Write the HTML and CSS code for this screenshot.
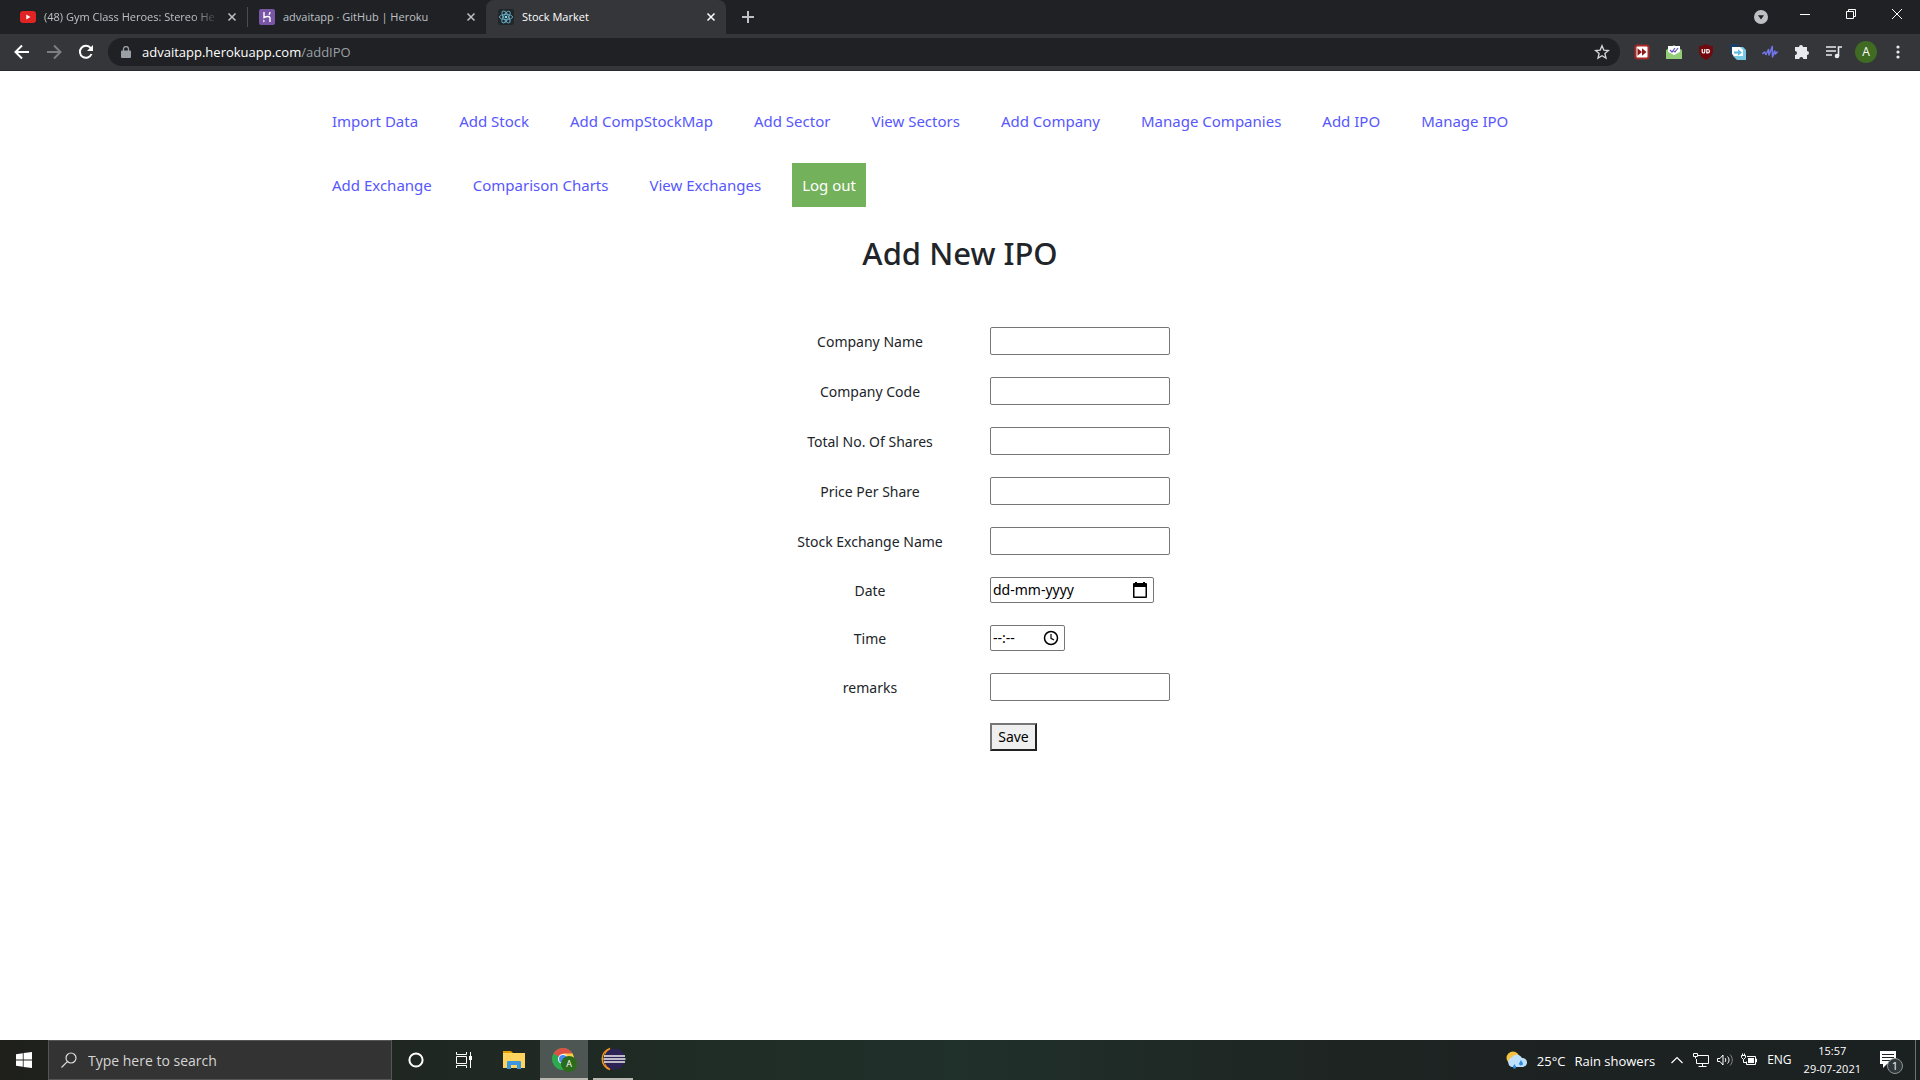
FILE: index.html
```html
<!DOCTYPE html>
<html lang="en">
<head>
<meta charset="utf-8">
<title>Stock Market</title>
<link rel="stylesheet" href="styles.css">
</head>
<body>
<header class="browser">
  <div class="tabstrip">
    <div class="tab">
      <svg class="favicon" viewBox="0 0 16 16"><rect y="2" width="16" height="12" rx="3" fill="#e02424"/><path d="M6.300 5.500v5l4.200-2.500z" fill="#fff"/></svg>
      <span class="tab-title fade">(48) Gym Class Heroes: Stereo He</span>
      <button class="tab-close" aria-label="Close tab"><svg viewBox="0 0 10 10"><path d="M1.500 1.500l7 7M8.500 1.500l-7 7"/></svg></button>
    </div>
    <div class="tab divided">
      <svg class="favicon" viewBox="0 0 16 16"><rect width="16" height="16" rx="2" fill="#7856a5"/><path d="M5 3v5.500c2-1 6-1.800 6 .8V13M11 3c0 1-.5 2-1.200 2.700" fill="none" stroke="#fff" stroke-width="1.400"/><path d="M4.300 10.500v3l1.700-1.500z" fill="#fff"/></svg>
      <span class="tab-title">advaitapp · GitHub | Heroku</span>
      <button class="tab-close" aria-label="Close tab"><svg viewBox="0 0 10 10"><path d="M1.500 1.500l7 7M8.500 1.500l-7 7"/></svg></button>
    </div>
    <div class="tab active">
      <svg class="favicon" viewBox="0 0 16 16"><rect width="16" height="16" rx="2" fill="#20272b"/><g fill="none" stroke="#68afc4" stroke-width=".9"><ellipse cx="8" cy="8" rx="6.600" ry="2.600"/><ellipse cx="8" cy="8" rx="6.600" ry="2.600" transform="rotate(60 8 8)"/><ellipse cx="8" cy="8" rx="6.600" ry="2.600" transform="rotate(120 8 8)"/></g><circle cx="8" cy="8" r="1.300" fill="#8bd8ed"/></svg>
      <span class="tab-title">Stock Market</span>
      <button class="tab-close" aria-label="Close tab"><svg viewBox="0 0 10 10"><path d="M1.500 1.500l7 7M8.500 1.500l-7 7"/></svg></button>
    </div>
    <button class="new-tab" aria-label="New tab"><svg viewBox="0 0 12 12"><path d="M6 0v12M0 6h12"/></svg></button>
    <div class="window-controls">
      <button class="tab-search" aria-label="Search tabs"><svg viewBox="0 0 14 14"><circle cx="7" cy="7" r="7" fill="#bdc1c6"/><path d="M4 5.200h6L7 9.500z" fill="#202124"/></svg></button>
      <button aria-label="Minimize"><svg viewBox="0 0 10 10"><path d="M0 5.500h10"/></svg></button>
      <button aria-label="Restore"><svg viewBox="0 0 10 10"><path d="M.5 2.500h7v7h-7zM2.500 2.500v-2h7v7h-2"/></svg></button>
      <button aria-label="Close"><svg viewBox="0 0 10 10"><path d="M0 0l10 10M10 0L0 10"/></svg></button>
    </div>
  </div>
  <div class="toolbar">
    <div class="nav-group">
      <button class="nav-btn" aria-label="Back"><svg viewBox="0 0 16 16"><path d="M15 8H2M8 1.500L1.500 8 8 14.500"/></svg></button>
      <button class="nav-btn dim" aria-label="Forward"><svg viewBox="0 0 16 16"><path d="M1 8h13M8 1.500L14.500 8 8 14.500"/></svg></button>
      <button class="nav-btn" aria-label="Reload"><svg viewBox="0 0 16 16"><path d="M13.500 10A6 6 0 1 1 12.700 4.200"/><path d="M15 1v6H9z" fill="#fff" stroke="none"/></svg></button>
    </div>
    <div class="omnibox">
      <svg class="lock" viewBox="0 0 10 12"><path d="M1 4.500h8a1 1 0 0 1 1 1V11a1 1 0 0 1-1 1H1a1 1 0 0 1-1-1V5.500a1 1 0 0 1 1-1z" fill="#9aa0a6"/><path d="M2.500 5V3a2.500 2.500 0 0 1 5 0v2" fill="none" stroke="#9aa0a6" stroke-width="1.300"/></svg>
      <span class="url">advaitapp.herokuapp.com<span class="path">/addIPO</span></span>
      <svg class="star" viewBox="0 0 16 16"><path d="M8 1.800l1.800 4.300 4.600.4-3.500 3 1.100 4.600L8 11.700l-4 2.400 1.100-4.600-3.500-3 4.600-.4z" fill="none" stroke="#d5d7da" stroke-width="1.300"/></svg>
    </div>
    <div class="extensions">
      <svg viewBox="0 0 16 16"><rect x=".5" y=".5" width="15" height="15" rx="3" fill="#a82a26"/><rect x="2.500" y="2.500" width="11" height="11" rx="1" fill="#fff"/><path d="M3.500 4.200L8 8l-4.500 3.800zM8 4.200L12.500 8 8 11.800z" fill="#8c1a1a"/></svg>
      <svg viewBox="0 0 16 16"><path d="M0 6l8-5 8 5v9H0z" fill="#84c66c"/><path d="M2 2h12v6l-6 4-6-4z" fill="#fff"/><path d="M4 6l2 2 3-4M7.500 7L9 8l3-4" fill="none" stroke="#6254b8" stroke-width="1.200"/><path d="M0 7l8 4 8-4v8H0z" fill="#94cd78"/></svg>
      <svg viewBox="0 0 16 16"><path d="M8 0c2 1.500 5 2 7 2v5c0 4-3 7-7 9-4-2-7-5-7-9V2c2 0 5-.5 7-2z" fill="#700a0e"/><path d="M4.200 5v2.700a1.300 1.300 0 0 0 2.600 0V5" fill="none" stroke="#fff" stroke-width="1.200"/><path d="M8.800 5.500h1a1.600 1.600 0 0 1 0 3.300h-1z" fill="none" stroke="#fff" stroke-width="1.200"/></svg>
      <svg viewBox="0 0 16 16"><path d="M0 0h9v12H3l-3-3z" fill="#1c3f68"/><path d="M5 3h8l3 3v10H7l-4-4z" fill="#78c8e4"/><path d="M2 3h8l3 3v6H4l-2-2z" fill="#fff"/><path d="M4 7.500h4V5.300l4 3.200-4 3.200V9.500H4z" fill="#5cb9e2"/></svg>
      <svg viewBox="0 0 16 16"><path d="M.8 9.500L2.500 8 4 10.500 6.500 5.500 7 11l3.300-8.500L10.500 13l2.300-6 .6 3L15.200 8" fill="none" stroke="#7377ee" stroke-width="1.500" stroke-linejoin="round" stroke-linecap="round"/></svg>
      <svg viewBox="0 0 16 16"><path d="M1 3h4a2 2 0 1 1 4 0h4v4a2 2 0 1 1 0 4v4H9.300a2 2 0 0 0-4 0H1v-4a2 2 0 0 0 0-4z" fill="#e8eaed"/></svg>
      <svg viewBox="0 0 16 16"><path d="M0 3h10M0 7h10M0 11h6M12.500 12V3H16" fill="none" stroke="#e8eaed" stroke-width="1.600"/><circle cx="11" cy="12" r="2.300" fill="#e8eaed"/></svg>
    </div>
    <button class="avatar" aria-label="Profile">A</button>
    <button class="menu" aria-label="Menu"><svg viewBox="0 0 4 14"><circle cx="2" cy="2" r="1.600"/><circle cx="2" cy="7" r="1.600"/><circle cx="2" cy="12" r="1.600"/></svg></button>
  </div>
</header>

<main class="page">
  <nav class="site-nav">
    <a href="#">Import Data</a>
    <a href="#">Add Stock</a>
    <a href="#">Add CompStockMap</a>
    <a href="#">Add Sector</a>
    <a href="#">View Sectors</a>
    <a href="#">Add Company</a>
    <a href="#">Manage Companies</a>
    <a href="#">Add IPO</a>
    <a href="#">Manage IPO</a>
    <a href="#">Add Exchange</a>
    <a href="#">Comparison Charts</a>
    <a href="#">View Exchanges</a>
    <a href="#" class="logout">Log out</a>
  </nav>
  <h1>Add New IPO</h1>
  <form class="ipo-form">
    <label for="name">Company Name</label><input id="name" type="text">
    <label for="code">Company Code</label><input id="code" type="text">
    <label for="shares">Total No. Of Shares</label><input id="shares" type="text">
    <label for="price">Price Per Share</label><input id="price" type="text">
    <label for="exchange">Stock Exchange Name</label><input id="exchange" type="text">
    <label for="date">Date</label>
    <div class="picker date">
      <input id="date" type="text" placeholder="dd-mm-yyyy">
      <button type="button" aria-label="Show date picker"><svg viewBox="0 0 16 16"><path d="M3 0h2v1h6V0h2v1h1a1 1 0 0 1 1 1v13a1 1 0 0 1-1 1H2a1 1 0 0 1-1-1V2a1 1 0 0 1 1-1h1zM2.500 5v9.500h11V5z" fill-rule="evenodd"/></svg></button>
    </div>
    <label for="time">Time</label>
    <div class="picker time">
      <input id="time" type="text" placeholder="--:--">
      <button type="button" aria-label="Show time picker"><svg viewBox="0 0 16 16"><circle cx="8" cy="8" r="6.500" fill="none" stroke="#000" stroke-width="1.500"/><path d="M8 4v4.300l3 1.800" fill="none" stroke="#000" stroke-width="1.200"/></svg></button>
    </div>
    <label for="remarks">remarks</label><input id="remarks" type="text">
    <button class="save" type="button">Save</button>
  </form>
</main>

<footer class="taskbar">
  <button class="start" aria-label="Start"><svg viewBox="0 0 16 16"><path d="M0 2.200L6.800 1.200v6.300H0zM7.600 1.100L16 0v7.500H7.600zM0 8.400h6.800v6.400L0 13.800zM7.600 8.400H16V16l-8.400-1.100z" fill="#fff"/></svg></button>
  <label class="search">
    <svg viewBox="0 0 16 16"><circle cx="10" cy="6" r="5" fill="none" stroke="#ddd" stroke-width="1.200"/><path d="M6.300 9.700L.5 15.500" stroke="#ddd" stroke-width="1.200"/></svg>
    <input type="text" placeholder="Type here to search" aria-label="Type here to search">
  </label>
  <div class="apps">
    <button aria-label="Cortana"><svg viewBox="0 0 16 16"><circle cx="8" cy="8" r="6.600" fill="none" stroke="#fff" stroke-width="2"/></svg></button>
    <button aria-label="Task View"><svg viewBox="0 0 16 16"><path d="M.5 0v2.500h10V0M.5 16v-2.500h10V16M.5 4.500h10v7H.5zM14.500 0v4M14.500 8v8" fill="none" stroke="#fff"/><path d="M13 4h3v4h-3z" fill="#fff"/></svg></button>
    <button class="files" aria-label="File Explorer"><svg class="large" viewBox="0 0 22 22"><path d="M0 2h8l2 2v3H0z" fill="#e2a100"/><path d="M0 4h22v15H0z" fill="#ffd45e"/><path d="M4 20v-7a1 1 0 0 1 1-1h12a1 1 0 0 1 1 1v7h-4v-4H8v4z" fill="#3a96dd"/></svg></button>
    <button class="current" aria-label="Google Chrome"><svg class="wide" viewBox="0 0 26 26"><circle cx="12" cy="13" r="11" fill="#2da94f"/><path d="M12 13L2.500 7.500a11 11 0 0 1 19 0z" fill="#dd5144"/><path d="M12 13V7.500h9.500A11 11 0 0 1 12 24l5-8z" fill="#ffcd46"/><circle cx="12" cy="13" r="5" fill="#fff"/><circle cx="12" cy="13" r="4" fill="#4a8af4"/><circle cx="18" cy="18" r="8" fill="#2c6b1c"/><text x="18" y="21" text-anchor="middle" class="badge">A</text></svg></button>
    <button class="open" aria-label="Eclipse"><svg class="wide" viewBox="0 0 26 26"><path d="M10 2.500A11 11 0 0 0 10 23.500 13 13 0 0 1 10 2.500z" fill="none" stroke="#f7941e" stroke-width="1.600"/><circle cx="14.500" cy="13" r="10.500" fill="#2c2255"/><path d="M4 10h21M3.500 13h22M4 16h21" stroke="#eee" stroke-width="1.600"/></svg></button>
  </div>
  <div class="tray">
    <svg class="weather" viewBox="0 0 22 18"><circle cx="7" cy="7" r="6.500" fill="#f7c244"/><path d="M6 16a5 5 0 0 1-.5-9.500A6 6 0 0 1 16 7a4.500 4.500 0 0 1 1 9z" fill="#bfe0fa"/><path d="M15 9l2 3.500a2 2 0 1 1-4 0zM8.500 13l1.500 2.500a1.600 1.600 0 1 1-3 0z" fill="#2f8be0"/></svg>
    <span class="temp">25°C</span>
    <span class="condition">Rain showers</span>
    <svg class="chevron" viewBox="0 0 12 8"><path d="M.5 7L6 1.500 11.500 7"/></svg>
    <svg class="tray-icon" viewBox="0 0 16 16"><path d="M5 3.500h10.500v8h-12V7M5.500 14.500h8M9.500 11.500v3M.5 1.500h4v3h-4zM2.500 4.500v2"/></svg>
    <svg class="tray-icon" viewBox="0 0 16 16"><path d="M.5 6.500H3L6 3v10L3 9.500H.5zM8 6c1 1 1 3 0 4M10.500 4.500c2 2 2 5 0 7"/><path d="M13 2.500c3 3 3 8 0 11" stroke="#888"/></svg>
    <svg class="tray-icon" viewBox="0 0 16 16"><path d="M6 4.500h8.500v8h-9v-3M14.500 7h1v3h-1M.5 3.500h4v2L2.500 7.500.5 5.500zM1.500 1.500v2M3.500 1.500v2M2.500 7.500v3h3"/><path d="M7 6h6v5H7z" fill="#fff" stroke="none"/></svg>
    <span class="lang">ENG</span>
    <div class="clock"><span>15:57</span><span>29-07-2021</span></div>
    <svg class="notices" viewBox="0 0 26 26"><path d="M1 3h16v13H8l-4 4v-4H1z" fill="#fff"/><path d="M3 6.500h12M3 9.500h12M3 12.500h8" stroke="#1e2422"/><circle cx="16" cy="18" r="7.500" fill="#30373a" stroke="#8f9494"/><text x="16" y="22" text-anchor="middle" class="count">1</text></svg>
    <span class="show-desktop"></span>
  </div>
</footer>
</body>
</html>
```
FILE: styles.css
```css
* { box-sizing: border-box; }

body {
  margin: 0;
  min-height: 100vh;
  display: flex;
  flex-direction: column;
  background: #fff;
  color: #212529;
  font: 15px/24px "Open Sans", "Noto Sans", sans-serif;
}

button {
  border: 0;
  padding: 0;
  background: none;
  color: inherit;
  font: inherit;
}

svg { display: block; flex: none; }

/* Browser frame */
.browser { background: #35363a; color: #e8eaed; font-size: 12px; border-bottom: 1px solid #292a2d; }
.tabstrip { display: flex; height: 34px; padding-left: 8px; background: #202124; }
.tab {
  display: flex;
  align-items: center;
  gap: 8px;
  width: 239px;
  padding: 0 10px 0 12px;
  color: #bdc1c6;
}
.divided { background: linear-gradient(#4a4c50, #4a4c50) 0 7px / 1px 20px no-repeat; }
.active { width: 240px; background: #35363a; color: #fff; border-radius: 8px 8px 0 0; }
.tab-title { flex: 1; white-space: nowrap; font-size: 11px; }
.favicon { width: 16px; height: 16px; }
.fade { mask-image: linear-gradient(90deg, #000 85%, transparent); }
.tab-close svg { width: 10px; height: 10px; stroke: currentColor; stroke-width: 1.5; }
.new-tab { width: 44px; display: flex; align-items: center; justify-content: center; }
.new-tab svg { width: 12px; height: 12px; stroke: #bdc1c6; stroke-width: 2; }
.window-controls { margin-left: auto; display: flex; height: 28px; }
.window-controls button { width: 46px; display: flex; align-items: center; justify-content: center; }
.window-controls svg { width: 10px; height: 10px; fill: none; stroke: #fff; }
.window-controls .tab-search { width: 42px; height: 34px; }
.window-controls .tab-search svg { width: 14px; height: 14px; stroke: none; }

.toolbar { display: flex; align-items: center; height: 36px; padding: 0 15px 0 6px; }
.nav-group { display: flex; padding-right: 6px; }
.nav-btn { width: 32px; }
.nav-btn svg { width: 16px; height: 16px; margin: 0 auto; fill: none; stroke: #fff; stroke-width: 2; }
.dim svg { stroke: #7d7e82; }
.omnibox {
  flex: 1;
  display: flex;
  align-items: center;
  gap: 11px;
  height: 28px;
  padding: 0 10px 0 13px;
  border-radius: 14px;
  background: #202124;
}
.lock { width: 10px; height: 12px; }
.url { flex: 1; color: #fff; font-size: 13px; }
.path { color: #9aa0a6; }
.star { width: 16px; height: 16px; }
.extensions { display: flex; gap: 16px; padding: 0 13px 0 14px; }
.extensions svg { width: 16px; height: 16px; }
.avatar { width: 22px; height: 22px; border-radius: 50%; background: #3f6b22; color: #fff; line-height: 22px; }
.menu { width: 28px; display: flex; justify-content: flex-end; padding-right: 5px; }
.menu svg { width: 4px; height: 14px; fill: #e8eaed; }

/* Page */
.page { flex: 1; padding: 28px 16px; font-family: "Noto Sans", "Open Sans", sans-serif; }
.site-nav { display: flex; flex-wrap: wrap; gap: 20px 21px; max-width: 1276px; margin: 0 auto; }
.site-nav a { padding: 10px; color: #5757fd; text-decoration: none; }
.site-nav .logout { background: #73b15a; color: #fff; }
h1 { margin: 27px 0 55px; text-align: center; font-size: 31px; line-height: 38px; font-weight: 500; }

.ipo-form {
  display: grid;
  grid-template-columns: 240px 180px;
  justify-content: center;
  align-items: center;
  row-gap: 22px;
  font-size: 14px;
}
.ipo-form label { padding-top: 2px; text-align: center; }
.ipo-form > input, .picker {
  height: 28px;
  border: 1px solid #767676;
  border-radius: 2px;
  background: #fff;
}
.ipo-form input { width: 100%; padding: 0 2px; font: inherit; color: #000; }
.picker { display: flex; align-items: center; height: 26px; padding-right: 5px; }
.picker input { flex: 1; min-width: 0; height: 24px; border: 0; background: none; }
.picker input::placeholder { color: #000; }
.picker svg { width: 16px; height: 16px; }
.date { width: 164px; }
.time { width: 75px; }
.save {
  grid-column: 2;
  justify-self: start;
  width: 47px;
  height: 28px;
  border: 2px outset #767676;
  background: #efefef;
  color: #000;
}

/* Taskbar */
.taskbar { display: flex; height: 40px; background: linear-gradient(90deg, #1f201b, #20302a 50%, #1e2422 70%, #1b2021); color: #fff; }
.start { width: 48px; display: flex; align-items: center; justify-content: center; }
.start svg { width: 16px; height: 16px; }
.search {
  display: flex;
  align-items: center;
  gap: 11px;
  width: 344px;
  padding: 0 12px;
  border: 1px solid #555;
  background: #333;
}
.search svg { width: 16px; height: 16px; }
.search input { flex: 1; min-width: 0; border: 0; padding: 2px 0 0; background: none; color: #fff; font: inherit; font-size: 14px; }
.search input::placeholder { color: #d5d5d5; }
.apps { display: flex; }
.apps button { width: 48px; display: flex; align-items: center; justify-content: center; }
.apps .files { width: 52px; }
.apps svg { width: 16px; height: 16px; }
.apps .large { width: 22px; height: 22px; }
.apps .wide { width: 26px; height: 26px; }
.apps .current { background: #4d5653; border-bottom: 2px solid #b8b8b0; }
.apps .open { border-bottom: 2px solid #b8b8b0; width: 40px; margin-left: 5px; }
.badge { fill: #fff; font-size: 9px; }

.tray { display: flex; align-items: center; margin-left: auto; font-size: 13px; }
.weather { width: 22px; height: 18px; }
.temp { margin: 0 9px; padding-top: 2px; }
.condition { margin-right: 16px; padding-top: 2px; }
.chevron { width: 12px; height: 8px; fill: none; stroke: #fff; stroke-width: 1.2; margin-right: 10px; }
.tray-icon { width: 16px; height: 16px; fill: none; stroke: #fff; margin-right: 8px; }
.lang { font-size: 12px; margin: 0 12px 0 2px; }
.clock { display: flex; flex-direction: column; align-items: center; font-size: 11px; line-height: 18px; }
.notices { width: 26px; height: 26px; margin: 2px 10px 0 18px; }
.count { fill: #fff; font-size: 11px; }
.show-desktop { width: 5px; height: 40px; border-left: 1px solid #6b7070; }
```
